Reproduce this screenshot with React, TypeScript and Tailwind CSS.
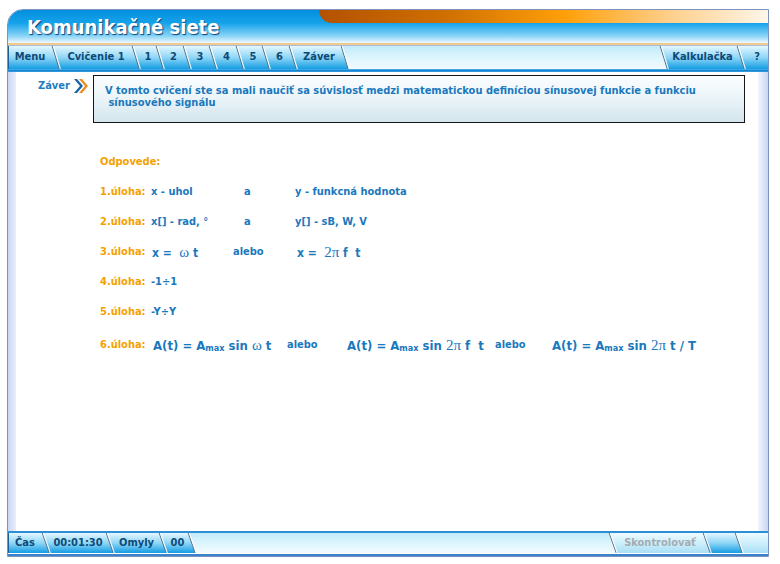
import React, { useId } from "react";

const ui = "font-['DejaVu_Sans',Verdana,sans-serif] [font-stretch:condensed]";

type Fill = "tab" | "bar" | "pale";

const stops: Record<Fill, [string, string, string]> = {
  tab: ["#e4f7ff", "#8fd6f6", "#139de3"],
  bar: ["#c2ebf9", "#dcf5fd", "#f2fbff"],
  pale: ["#eefaff", "#cdeffb", "#a9def5"],
};

const Sep = ({ left, right, h }: { left: Fill; right: Fill; h: number }) => {
  const id = useId().replace(/[^a-zA-Z0-9]/g, "");
  const grad = (f: Fill) => (
    <linearGradient id={`${f}${id}`} x1="0" y1="0" x2="0" y2="1">
      <stop offset="0" stopColor={stops[f][0]} />
      <stop offset="0.5" stopColor={stops[f][1]} />
      <stop offset="1" stopColor={stops[f][2]} />
    </linearGradient>
  );
  return (
    <svg width="10" height={h} viewBox={`0 0 10 ${h}`} className="block shrink-0">
      <defs>
        {grad(left)}
        {right !== left && grad(right)}
      </defs>
      <polygon points={`0,0 1.5,0 8.5,${h} 0,${h}`} fill={`url(#${left}${id})`} />
      <polygon points={`1.5,0 10,0 10,${h} 8.5,${h}`} fill={`url(#${right}${id})`} />
      <line x1="1.2" y1="0" x2="8.2" y2={h} stroke="#5f7487" strokeWidth="1" />
      <line x1="2.4" y1="0" x2="9.4" y2={h} stroke="#ffffff" strokeWidth="1" />
    </svg>
  );
};

const tabBg = "bg-[linear-gradient(to_bottom,#e4f7ff,#8fd6f6_50%,#139de3)]";
const paleBg = "bg-[linear-gradient(to_bottom,#eefaff,#cdeffb_50%,#a9def5)]";
const barBg = "bg-[linear-gradient(to_bottom,#c2ebf9,#dcf5fd_50%,#f2fbff)]";

const Tab = ({ w, children, pale }: { w: string; children?: React.ReactNode; pale?: boolean }) => (
  <div
    className={`${w} ${pale ? paleBg : tabBg} h-full shrink-0 flex items-center justify-center text-[11px] font-bold ${
      pale ? "text-[#a3abb3]" : "text-[#0d4a78]"
    }`}
  >
    {children}
  </div>
);

const Arrow = () => (
  <svg width="16" height="16" viewBox="0 0 16 16" className="block">
    <path d="M1 1 L7 8 L1 15 L4 15 L10 8 L4 1 Z" fill="#1565a8" />
    <path d="M6 1 L12 8 L6 15 L9 15 L15 8 L9 1 Z" fill="#f08a1c" />
  </svg>
);

const Lbl = ({ children }: { children: React.ReactNode }) => (
  <span className="w-[51px] shrink-0 text-[#f5a100]">{children}</span>
);

const Sym = ({ children }: { children: React.ReactNode }) => (
  <span className="font-['Liberation_Serif',serif] font-normal text-[15px] [font-stretch:normal]">{children}</span>
);

const Sub = () => <span className="text-[9px] align-[-1px]">max</span>;

export default function App() {
  return (
    <div className={`${ui} bg-white w-[780px] h-[564px] pt-[9px] pl-[7px]`}>
      <div className="w-[762px] h-[548px] border border-[#7c93bd] rounded-tl-[16px] overflow-hidden flex flex-col">
        {/* header */}
        <div className="relative h-[33px] shrink-0 bg-[linear-gradient(to_bottom,#048fdf,#16a2ea_40%,#86d3f6_78%,#eef8ff)]">
          <div className="absolute top-0 right-0 left-[311px] h-[13px] rounded-bl-[14px] bg-[linear-gradient(to_right,#b45200,#cf6f00_28%,#ffa00a_55%,#ffcf8a_78%,#fff6ea)]" />
          <div className="pl-[19px] pt-[5px] text-[20px] leading-[24px] font-bold text-white [text-shadow:1px_1px_1px_#0b3f78]">
            Komunikačné siete
          </div>
        </div>
        <div className="h-[2px] shrink-0 bg-[#f1c98c]" />
        <div className="h-[1px] shrink-0 bg-[#a9bedb]" />

        {/* nav */}
        <div className={`h-[23px] shrink-0 flex ${barBg}`}>
          <div className="w-[1px] h-full bg-[#1b5f96]" />
          <Tab w="w-[42px]">Menu</Tab>
          <Sep left="tab" right="tab" h={23} />
          <Tab w="w-[70px]">Cvičenie 1</Tab>
          <Sep left="tab" right="tab" h={23} />
          <Tab w="w-[14px]">1</Tab>
          <Sep left="tab" right="tab" h={23} />
          <Tab w="w-[17px]">2</Tab>
          <Sep left="tab" right="tab" h={23} />
          <Tab w="w-[16px]">3</Tab>
          <Sep left="tab" right="tab" h={23} />
          <Tab w="w-[17px]">4</Tab>
          <Sep left="tab" right="tab" h={23} />
          <Tab w="w-[16px]">5</Tab>
          <Sep left="tab" right="tab" h={23} />
          <Tab w="w-[17px]">6</Tab>
          <Sep left="tab" right="tab" h={23} />
          <Tab w="w-[42px]">Záver</Tab>
          <Sep left="tab" right="bar" h={23} />
          <div className="flex-1" />
          <Sep left="bar" right="tab" h={23} />
          <Tab w="w-[67px]">Kalkulačka</Tab>
          <Sep left="tab" right="tab" h={23} />
          <Tab w="w-[22px]">?</Tab>
        </div>
        <div className="h-[3px] shrink-0 bg-[linear-gradient(to_bottom,#5cb6ea,#1487d4,#3d9ee0)]" />

        {/* content */}
        <div className="flex-1 flex min-h-0">
          <div className="w-[8px] shrink-0 bg-[linear-gradient(to_right,#c9d5f2,#e9eefb)]" />
          <div className="flex-1 bg-white pt-[3px]">
            <div className="flex items-start pl-[22px]">
              <div className="w-[35px] pt-[5px] text-[11px] leading-[12px] font-bold text-[#1f7dc0]">Záver</div>
              <div className="pt-[3px]">
                <Arrow />
              </div>
              <div className="ml-[4px] w-[652px] h-[48px] border border-[#151515] bg-[linear-gradient(to_bottom,#fbfdff,#eaf4f8_50%,#d3e5ed)] pl-[11px] pt-[9px] text-[11px] leading-[12px] font-bold text-[#1a78bd]">
                V tomto cvičení ste sa mali naučiť sa súvislosť medzi matematickou definíciou sínusovej funkcie a funkciu
                <br />
                &nbsp;sínusového signálu
              </div>
            </div>

            <div className="mt-[24px] pl-[84px] text-[11px] font-bold text-[#1a78bd]">
              <div className="h-[30px] flex items-center text-[#f5a100]">Odpovede:</div>
              <div className="h-[30px] flex items-center">
                <Lbl>1.úloha:</Lbl>
                <span className="w-[93px] shrink-0">x - uhol</span>
                <span className="w-[51px] shrink-0">a</span>
                <span>y - funkcná hodnota</span>
              </div>
              <div className="h-[30px] flex items-center">
                <Lbl>2.úloha:</Lbl>
                <span className="w-[93px] shrink-0">x[] - rad, °</span>
                <span className="w-[51px] shrink-0">a</span>
                <span>y[] - sB, W, V</span>
              </div>
              <div className="h-[30px] flex items-center">
                <Lbl>3.úloha:</Lbl>
                <span className="w-[82px] shrink-0 pl-[1px] text-[12px] leading-none">
                  x = &nbsp;<Sym>ω</Sym> t
                </span>
                <span className="w-[64px] shrink-0">alebo</span>
                <span className="text-[12px] leading-none">
                  x = &nbsp;<Sym>2π</Sym> f &nbsp;t
                </span>
              </div>
              <div className="h-[30px] flex items-center">
                <Lbl>4.úloha:</Lbl>
                <span>-1÷1</span>
              </div>
              <div className="h-[30px] flex items-center">
                <Lbl>5.úloha:</Lbl>
                <span>-Y÷Y</span>
              </div>
              <div className="h-[36px] flex items-center">
                <Lbl>6.úloha:</Lbl>
                <span className="w-[136px] shrink-0 pl-[2px] text-[13px] leading-none">
                  A(t) = A<Sub /> sin <Sym>ω</Sym> t
                </span>
                <span className="w-[60px] shrink-0">alebo</span>
                <span className="w-[148px] shrink-0 text-[13px] leading-none">
                  A(t) = A<Sub /> sin <Sym>2π</Sym> f &nbsp;t
                </span>
                <span className="w-[57px] shrink-0">alebo</span>
                <span className="text-[13px] leading-none">
                  A(t) = A<Sub /> sin <Sym>2π</Sym> t / T
                </span>
              </div>
            </div>
          </div>
          <div className="w-[10px] shrink-0 bg-[linear-gradient(to_right,#f2f5fd,#c9d7f2)]" />
        </div>

        {/* footer */}
        <div className="h-[2px] shrink-0 bg-[#2b8fd6]" />
        <div className={`h-[20px] shrink-0 flex ${barBg}`}>
          <div className="w-[1px] h-full bg-[#1b5f96]" />
          <Tab w="w-[32px]">Čas</Tab>
          <Sep left="tab" right="tab" h={20} />
          <Tab w="w-[54px]">00:01:30</Tab>
          <Sep left="tab" right="tab" h={20} />
          <Tab w="w-[43px]">Omyly</Tab>
          <Sep left="tab" right="tab" h={20} />
          <Tab w="w-[19px]">00</Tab>
          <Sep left="tab" right="bar" h={20} />
          <div className="flex-1" />
          <Sep left="bar" right="pale" h={20} />
          <Tab w="w-[84px]" pale>
            Skontrolovať
          </Tab>
          <Sep left="pale" right="tab" h={20} />
          <Tab w="w-[22px]" />
          <Sep left="tab" right="pale" h={20} />
          <Tab w="w-[24px]" pale />
        </div>
        <div className="h-[1px] shrink-0 bg-white" />
        <div className="h-[2px] shrink-0 bg-[#3a82c9]" />
      </div>
    </div>
  );
}
